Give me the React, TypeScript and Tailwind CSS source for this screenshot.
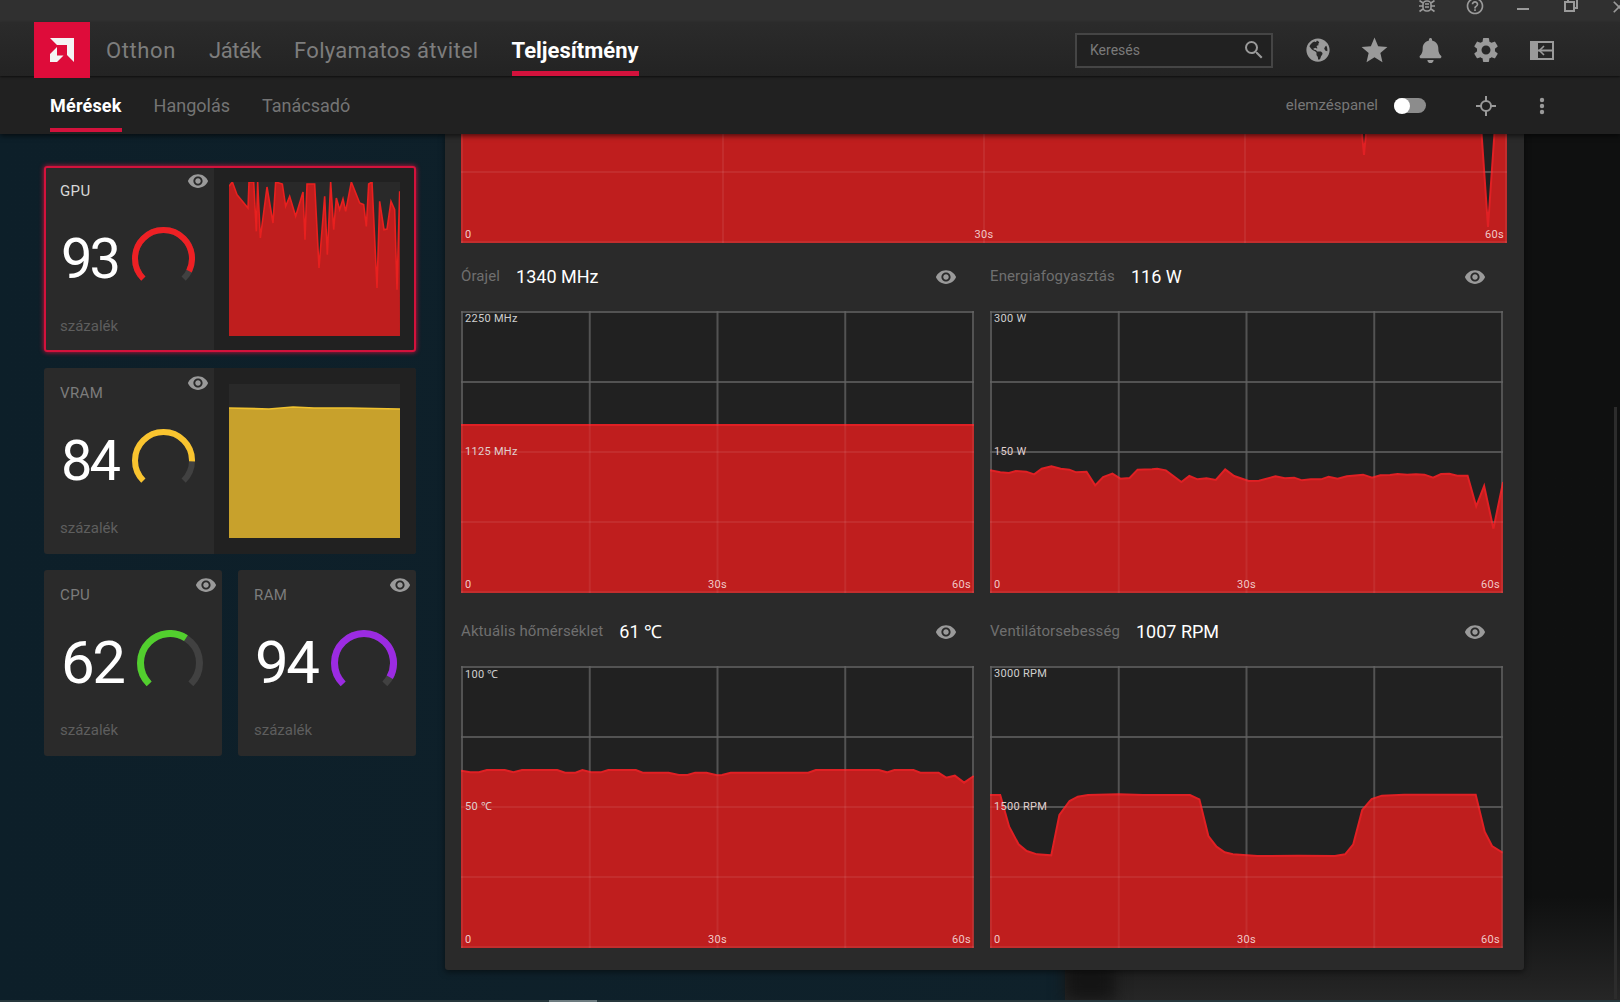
import { FaBell, FaGlobeAmericas } from 'react-icons/fa';
import { MdClose, MdHelpOutline, MdSearch, MdSettings, MdStar, MdVisibility } from 'react-icons/md';

type Pt = [number, number];

const scaled = (raw: Pt[], x0: number, y0: number, sx: number, sy: number): Pt[] =>
  raw.map(([x, y]) => [(x - x0) / sx, (y - y0) / sy]);

const powerLine = scaled(
  [
    [30, 510], [60, 516], [85, 518], [105, 512], [135, 514], [158, 522], [180, 505], [208, 498],
    [235, 505], [260, 508], [280, 516], [310, 514], [335, 555], [358, 530], [385, 520], [408, 535],
    [435, 533], [458, 508], [500, 507], [515, 505], [540, 510], [585, 545], [608, 527], [632, 537],
    [658, 534], [685, 539], [712, 507], [738, 527], [780, 542], [810, 541], [858, 528], [885, 534],
    [912, 532], [935, 540], [960, 537], [990, 537], [1012, 529], [1038, 535], [1065, 528], [1112, 523],
    [1138, 532], [1162, 525], [1190, 524], [1212, 521], [1240, 523], [1265, 522], [1290, 523],
    [1315, 532], [1338, 521], [1362, 520], [1385, 526], [1415, 526], [1440, 618], [1463, 557],
    [1490, 685], [1518, 545],
  ],
  30, 32, 2.9, 3,
);

const tempLine = scaled(
  [
    [33, 482], [60, 487], [85, 487], [108, 480], [160, 480], [185, 487], [210, 480], [312, 480],
    [335, 488], [365, 488], [385, 480], [410, 487], [438, 487], [460, 480], [540, 480], [560, 488],
    [635, 488], [665, 495], [690, 495], [712, 488], [745, 488], [775, 496], [790, 495], [815, 488],
    [1040, 488], [1062, 480], [1245, 480], [1268, 487], [1290, 480], [1345, 480], [1365, 488],
    [1418, 488], [1440, 503], [1465, 497], [1492, 518], [1520, 498],
  ],
  33, 168, 2.9, 3,
);

const fanLine = scaled(
  [
    [25, 555], [50, 555], [72, 650], [95, 703], [115, 723], [140, 733], [175, 736], [195, 615],
    [220, 573], [240, 560], [265, 555], [340, 553], [400, 555], [515, 555], [538, 568], [560, 678],
    [580, 710], [600, 727], [620, 733], [680, 738], [780, 737], [870, 738], [895, 733], [915, 703],
    [937, 600], [960, 567], [985, 557], [1040, 554], [1215, 554], [1237, 665], [1255, 708], [1281, 728],
  ],
  25, 168, 2.45, 3,
);

const gpuLine = scaled(
  [
    [598, 110], [608, 97], [622, 135], [655, 175], [658, 97], [672, 97], [680, 245], [684, 97],
    [692, 265], [712, 112], [730, 220], [738, 97], [758, 103], [768, 170], [780, 140], [798, 200],
    [820, 127], [826, 270], [832, 103], [855, 103], [868, 355], [885, 140], [893, 315], [903, 97],
    [912, 240], [920, 145], [930, 180], [940, 148], [948, 185], [965, 97], [990, 160], [1002, 165],
    [1010, 230], [1017, 103], [1027, 97], [1042, 415], [1050, 155], [1063, 240], [1072, 238],
    [1084, 155], [1095, 180], [1102, 420], [1110, 125],
  ],
  598, 97, 3, 3,
);

const vramLine: Pt[] = [[0, 24], [40, 25], [64, 23], [85, 24], [120, 24], [171, 25]];

const clockLine: Pt[] = [[0, 114], [513, 114]];

const gpuUsageLine: Pt[] = [
  [0, 150], [899, 150], [903, 194], [907, 150], [1019, 150], [1027, 266], [1035, 150], [1046, 150],
];

function toPoints(line: Pt[]) {
  return line.map(([x, y]) => `${x},${y}`).join(' ');
}

function BigChart({
  width,
  line,
  top,
  mid,
  topClass = 'top-0',
}: {
  width: number;
  line: Pt[];
  top?: string;
  mid?: string;
  topClass?: string;
}) {
  const height = 282;
  const vs = [0, 1, 2, 3, 4].map((i) => 1 + (i * (width - 2)) / 4);
  const hs = [0, 1, 2, 3, 4].map((i) => 1 + (i * (height - 2)) / 4);
  const first = line[0];
  const last = line[line.length - 1];
  const area = `${first[0]},${height} ${toPoints(line)} ${last[0]},${height}`;
  const grid = (
    <>
      {vs.map((x) => (
        <line key={`v${x}`} x1={x} y1={0} x2={x} y2={height} />
      ))}
      {hs.map((y) => (
        <line key={`h${y}`} x1={0} y1={y} x2={width} y2={y} />
      ))}
    </>
  );
  return (
    <div className="relative shrink-0" style={{ width, height }}>
      <svg width={width} height={height} className="block bg-[#212121]">
        <g stroke="#464646" strokeWidth={2}>
          {grid}
        </g>
        <polygon points={area} fill="#bf1e1e" />
        <polyline points={toPoints(line)} fill="none" stroke="#e02024" strokeWidth={2} />
        <g stroke="#ffffff" strokeOpacity={0.07} strokeWidth={2}>
          {grid}
        </g>
      </svg>
      {top && (
        <span className={`absolute left-[4px] text-[11px] leading-[16px] tracking-[0.3px] text-[#cfcfcf] ${topClass}`}>
          {top}
        </span>
      )}
      {mid && (
        <span className="absolute left-[4px] top-[133px] text-[11px] leading-[16px] tracking-[0.3px] text-[#e0d0d0]">
          {mid}
        </span>
      )}
      <span className="absolute bottom-0 left-[4px] text-[11px] leading-[16px] text-[#f0c8c8]">0</span>
      <span className="absolute bottom-0 left-1/2 -translate-x-1/2 text-[11px] leading-[16px] tracking-[0.3px] text-[#f0c8c8]">
        30s
      </span>
      <span className="absolute bottom-0 right-[3px] text-[11px] leading-[16px] tracking-[0.3px] text-[#f0c8c8]">
        60s
      </span>
    </div>
  );
}

function ChartCell({
  label,
  value,
  line,
  top,
  mid,
  topClass,
}: {
  label: string;
  value: string;
  line: Pt[];
  top: string;
  mid: string;
  topClass?: string;
}) {
  return (
    <div className="w-[513px]">
      <div className="flex h-[68px] items-center pb-[1px] pr-[17px]">
        <span className="text-[15px] tracking-[0.1px] text-[#6f6f6f]">{label}</span>
        <span className="ml-[16px] text-[18px] text-white">{value}</span>
        <MdVisibility className="ml-auto text-[#9a9a9a]" size={22} />
      </div>
      <BigChart width={513} line={line} top={top} mid={mid} topClass={topClass} />
    </div>
  );
}

function Gauge({ value, color, size, stroke }: { value: number; color: string; size: number; stroke: number }) {
  const r = (size - stroke) / 2;
  const c = size / 2;
  // 270 degree arc, open at the bottom
  const d = `M ${c - r * 0.7071} ${c + r * 0.7071} A ${r} ${r} 0 1 1 ${c + r * 0.7071} ${c + r * 0.7071}`;
  return (
    <svg width={size} height={size} className="block shrink-0">
      <path d={d} fill="none" stroke="#414141" strokeWidth={stroke} />
      <path d={d} fill="none" stroke={color} strokeWidth={stroke} pathLength={100} strokeDasharray={`${value} 100`} />
    </svg>
  );
}

function MiniChart({ line, fill, stroke }: { line: Pt[]; fill: string; stroke: string }) {
  const w = 171;
  const h = 154;
  return (
    <svg width={w} height={h} className="block bg-[#292929]">
      <polygon points={`0,${h} ${toPoints(line)} ${w},${h}`} fill={fill} />
      <polyline points={toPoints(line)} fill="none" stroke={stroke} strokeWidth={1.6} />
    </svg>
  );
}

function MetricBody({
  label,
  value,
  color,
  active,
  small,
}: {
  label: string;
  value: number;
  color: string;
  active?: boolean;
  small?: boolean;
}) {
  return (
    <div
      className={`relative flex h-full flex-col justify-between pb-[16px] pl-[16px] pt-[15px] ${
        small ? 'w-full' : 'w-[170px] shrink-0'
      }`}
    >
      <div className={`text-[15px] leading-[20px] tracking-[0.4px] ${active ? 'text-[#d8d8d8]' : 'text-[#7c7c7c]'}`}>
        {label}
      </div>
      <MdVisibility className="absolute right-[5px] top-[4px] text-[#9a9a9a]" size={22} />
      <div className="flex items-center">
        <div
          className={`pl-[1px] text-white ${
            small ? 'w-[77px] text-[60px] tracking-[-2.5px]' : 'w-[72px] text-[56px] tracking-[-3px]'
          } leading-none font-normal`}
        >
          {value}
        </div>
        <Gauge value={value} color={color} size={small ? 66 : 63} stroke={small ? 7 : 6} />
      </div>
      <div className="text-[15px] leading-[20px] text-[#5e5e5e]">százalék</div>
    </div>
  );
}

function WideCard({
  label,
  value,
  color,
  line,
  fill,
  stroke,
  active,
}: {
  label: string;
  value: number;
  color: string;
  line: Pt[];
  fill: string;
  stroke: string;
  active?: boolean;
}) {
  return (
    <div
      className={`flex h-[186px] w-[372px] rounded-[3px] bg-[#2a2a2a] ${
        active ? 'shadow-[inset_0_0_0_2px_#d3123c,0_0_5px_#d3123c]' : ''
      }`}
    >
      <MetricBody label={label} value={value} color={color} active={active} />
      <div
        className={`flex flex-1 items-center justify-end rounded-r-[3px] bg-[#212121] ${
          active ? 'my-[2px] mr-[2px] pr-[14px]' : 'pr-[16px]'
        }`}
      >
        <MiniChart line={line} fill={fill} stroke={stroke} />
      </div>
    </div>
  );
}

function NavItem({ label, active, track = 'tracking-[0.6px]' }: { label: string; active?: boolean; track?: string }) {
  return (
    <div className="relative flex h-full items-center pt-[2px]">
      <span className={`text-[22px] ${active ? 'font-bold text-white' : `text-[#7d7d7d] ${track}`}`}>{label}</span>
      {active && <div className="absolute bottom-0 left-0 right-0 h-[5px] bg-[#d3123c]" />}
    </div>
  );
}

function SubNavItem({ label, active }: { label: string; active?: boolean }) {
  return (
    <div className="relative flex h-full items-center">
      <span className={`text-[18px] ${active ? 'font-bold tracking-[0.2px] text-white' : 'text-[#747474]'}`}>{label}</span>
      {active && <div className="absolute bottom-[2px] left-0 right-0 h-[4px] bg-[#d3123c]" />}
    </div>
  );
}

function IconBox({ children }: { children: React.ReactNode }) {
  return <div className="flex h-full w-[56px] items-center justify-center text-[#9a9a9a]">{children}</div>;
}

function TitleIcon({ children }: { children: React.ReactNode }) {
  return <div className="flex h-[22px] w-[48px] items-start justify-center text-[#9a9a9a]">{children}</div>;
}

export default function App() {
  return (
    <div className="flex h-[1002px] w-[1620px] flex-col overflow-hidden bg-[#0d1f28] font-[Roboto,sans-serif]">
      <div className="z-30 flex h-[22px] shrink-0 justify-end overflow-hidden bg-[#303030] pr-0">
        <div className="-mr-[23px] flex">
          <TitleIcon>
            <svg width="18" height="18" viewBox="0 0 18 18" className="-mt-[3px]" fill="none" stroke="#9a9a9a" strokeWidth="1.6">
              <rect x="5" y="4" width="8" height="10" rx="3.5" />
              <path d="M7 7h4M7 10h4M5 6 1.5 3.5M13 6l3.5-2.5M5 9H1M13 9h4M5 12l-3.5 2.5M13 12l3.5 2.5" />
            </svg>
          </TitleIcon>
          <TitleIcon>
            <MdHelpOutline className="-mt-[4px]" size={20} />
          </TitleIcon>
          <TitleIcon>
            <div className="mt-[8px] h-[2px] w-[12px] bg-[#9a9a9a]" />
          </TitleIcon>
          <TitleIcon>
            <svg width="14" height="14" viewBox="0 0 14 14" className="-mt-[2px]" fill="none" stroke="#9a9a9a" strokeWidth="2">
              <rect x="1" y="4" width="9" height="9" />
              <path d="M4 4V1h9v9h-3" />
            </svg>
          </TitleIcon>
          <TitleIcon>
            <MdClose className="-mt-[3px]" size={20} />
          </TitleIcon>
        </div>
      </div>

      <div className="z-30 flex h-[54px] shrink-0 items-center bg-gradient-to-b from-[#2b2b2b] to-[#232323] pl-[34px] pr-[50px] shadow-[0_1px_2px_rgba(0,0,0,0.6)]">
        <div className="flex h-[56px] w-[56px] shrink-0 items-center justify-center self-start bg-[#de0c3a]">
          <svg width="24" height="24" viewBox="0 0 24 24" fill="#f4f4f4">
            <path d="M0 0H24V24L17 17V7H7Z" />
            <path d="M7 9 0 16V24H7L13.5 17.5H7Z" />
          </svg>
        </div>
        <div className="ml-[16px] flex h-full gap-[33px]">
          <NavItem label="Otthon" />
          <NavItem label="Játék" track="tracking-[-0.4px]" />
          <NavItem label="Folyamatos átvitel" track="tracking-[0.3px]" />
          <NavItem label="Teljesítmény" active />
        </div>
        <div className="ml-auto flex h-full items-center pt-[2px]">
          <div className="mr-[17px] flex h-[35px] w-[198px] items-center border-2 border-[#454545] bg-[#212121] pl-[13px] pr-[5px]">
            <span className="text-[14px] text-[#7a7a7a]">Keresés</span>
            <MdSearch className="ml-auto text-[#9a9a9a]" size={24} />
          </div>
          <IconBox>
            <FaGlobeAmericas size={24} />
          </IconBox>
          <IconBox>
            <MdStar size={31} />
          </IconBox>
          <IconBox>
            <FaBell size={25} />
          </IconBox>
          <IconBox>
            <MdSettings size={30} />
          </IconBox>
          <IconBox>
            <svg width="24" height="19" viewBox="0 0 24 19">
              <rect width="24" height="19" fill="#9a9a9a" />
              <rect x="8" y="2" width="14" height="6.5" fill="#262626" />
              <rect x="8" y="10.5" width="14" height="6.5" fill="#262626" />
              <path d="M14 5 9.5 9.5 14 14" fill="none" stroke="#9a9a9a" strokeWidth="1.6" />
            </svg>
          </IconBox>
        </div>
      </div>

      <div className="z-20 flex h-[58px] shrink-0 items-center bg-[#212121] pl-[50px] pr-[50px] shadow-[0_2px_5px_rgba(0,0,0,0.6)]">
        <div className="flex h-full gap-[32px]">
          <SubNavItem label="Mérések" active />
          <SubNavItem label="Hangolás" />
          <SubNavItem label="Tanácsadó" />
        </div>
        <div className="ml-auto flex h-full items-center pt-[1px]">
          <span className="text-[15px] text-[#777777]">elemzéspanel</span>
          <div className="ml-[16px] mr-[32px] h-[15px] w-[32px] rounded-full bg-[#8c8c8c]">
            <div className="h-[16px] w-[16px] rounded-full bg-white" />
          </div>
          <IconBox>
            <svg width="20" height="20" viewBox="0 0 20 20" fill="none" stroke="#9a9a9a" strokeWidth="2">
              <circle cx="10" cy="10" r="5" />
              <path d="M10 0v5M10 15v5M0 10h5M15 10h5" />
            </svg>
          </IconBox>
          <IconBox>
            <svg width="6" height="18" viewBox="0 0 6 18" fill="#9a9a9a">
              <circle cx="3" cy="3" r="2.2" />
              <circle cx="3" cy="9" r="2.2" />
              <circle cx="3" cy="15" r="2.2" />
            </svg>
          </IconBox>
        </div>
      </div>

      <div className="relative flex flex-1 overflow-hidden bg-gradient-to-r from-[#0d1f29] to-[#10222b]">
        {/* dimmed background behind the panel */}
        <div className="absolute bottom-[2px] left-[1065px] right-0 top-0 bg-gradient-to-b from-[#0f1010] from-88% to-[#262626]" />
        <div className="absolute bottom-[2px] left-[1065px] h-[40px] w-[50px] bg-[#141414] blur-sm" />
        <div className="absolute bottom-0 left-0 right-0 h-[2px] bg-[#26373c]" />
        <div className="absolute bottom-0 left-[549px] h-[2px] w-[48px] bg-[#6d7c80]" />

        <div className="relative w-[445px] shrink-0 pl-[44px] pt-[32px]">
          <div className="flex w-[372px] flex-col gap-[16px]">
            <WideCard label="GPU" value={93} color="#ee2024" line={gpuLine} fill="#bf1e1e" stroke="#e8201f" active />
            <WideCard label="VRAM" value={84} color="#f9c42f" line={vramLine} fill="#c8a12c" stroke="#f0c22f" />
            <div className="flex gap-[16px]">
              <div className="h-[186px] w-[178px] rounded-[3px] bg-[#2a2a2a]">
                <MetricBody label="CPU" value={62} color="#52cf2e" small />
              </div>
              <div className="h-[186px] w-[178px] rounded-[3px] bg-[#2a2a2a]">
                <MetricBody label="RAM" value={94} color="#9b2be2" small />
              </div>
            </div>
          </div>
        </div>

        <div className="relative h-[836px] w-[1079px] shrink-0 rounded-b-[3px] bg-[#2a2a2a] px-[16px] shadow-[0_2px_6px_rgba(0,0,0,0.5)]">
          <div className="h-[109px] overflow-hidden">
            <div className="-mt-[173px]">
              <BigChart width={1046} line={gpuUsageLine} />
            </div>
          </div>
          <div className="flex gap-[16px]">
            <ChartCell label="Órajel" value="1340 MHz" line={clockLine} top="2250 MHz" mid="1125 MHz" />
            <ChartCell label="Energiafogyasztás" value="116 W" line={powerLine} top="300 W" mid="150 W" />
          </div>
          <div className="mt-[5px] flex gap-[16px]">
            <ChartCell
              label="Aktuális hőmérséklet"
              value="61 ℃"
              line={tempLine}
              top="100 ℃"
              mid="50 ℃"
              topClass="top-[1px]"
            />
            <ChartCell label="Ventilátorsebesség" value="1007 RPM" line={fanLine} top="3000 RPM" mid="1500 RPM" />
          </div>
        </div>

        <div className="relative flex flex-1 justify-end pr-[3px] pt-[273px]">
          <div className="h-[592px] w-[3px] bg-[#2c2c2c]" />
        </div>
      </div>
    </div>
  );
}
